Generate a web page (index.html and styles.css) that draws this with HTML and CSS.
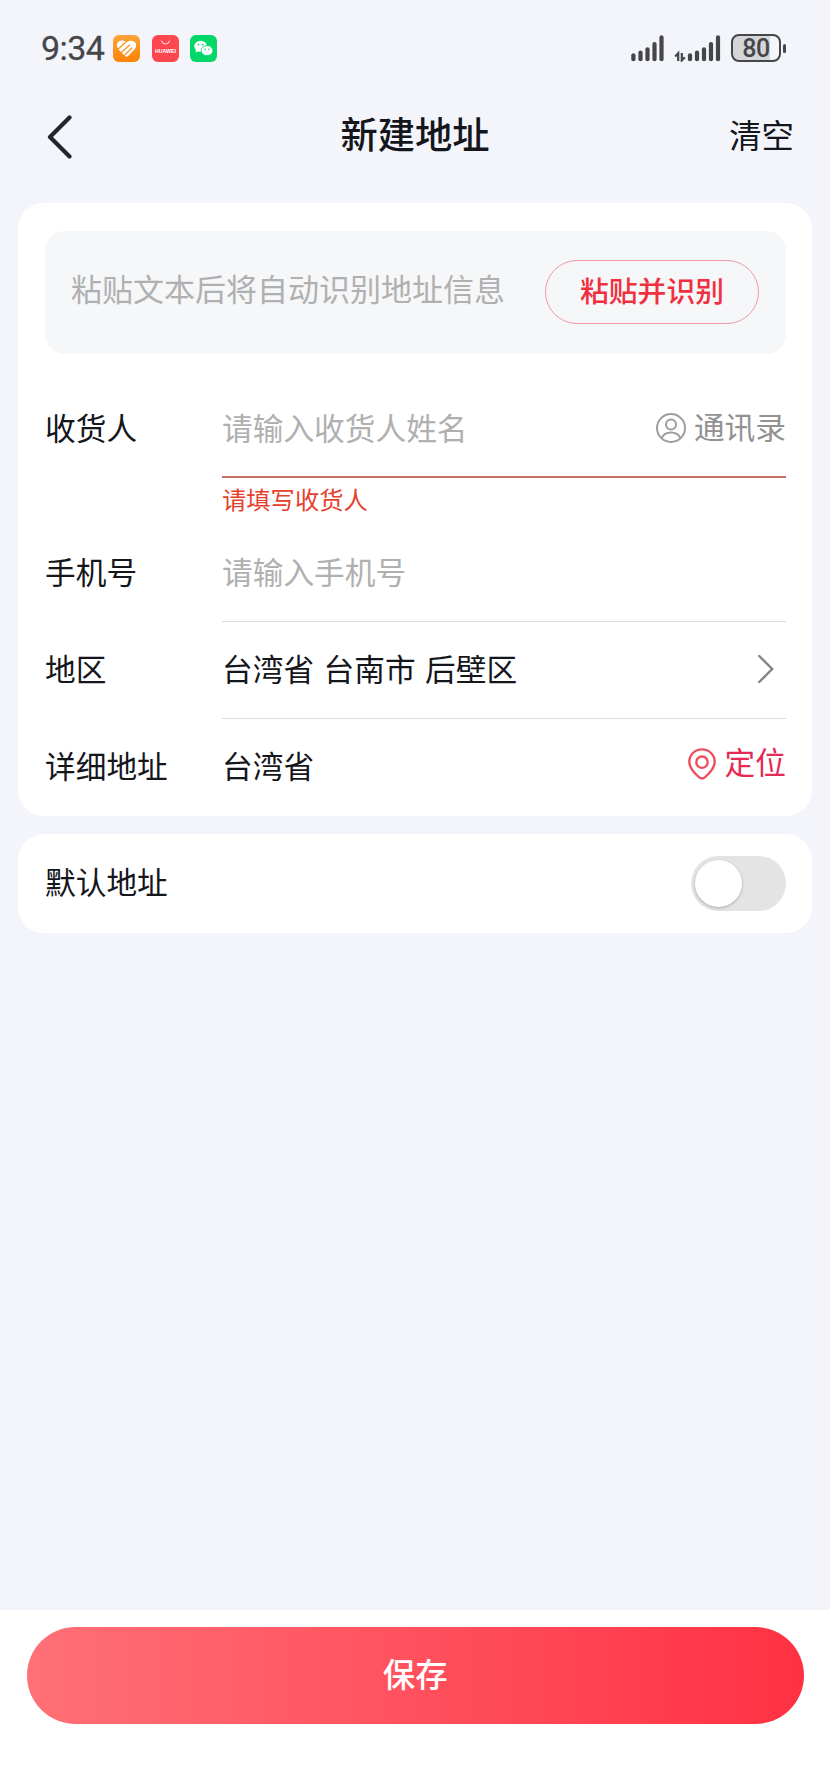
FILE: index.html
```html
<!DOCTYPE html>
<html lang="zh-CN">
<head>
    <meta charset="UTF-8">
    <meta name="viewport" content="width=device-width, initial-scale=1.0">
    <title>新建地址</title>
    <link rel="stylesheet" href="styles.css">
</head>
<body>
    <div class="status-bar">
        <span class="time">9:34</span>
        <div class="app-icons">
            <svg width="27" height="27" viewBox="0 0 27 27">
                <defs>
                    <linearGradient id="orange" x1="0" y1="0" x2="0" y2="1">
                        <stop offset="0" stop-color="#fba33a"/>
                        <stop offset="1" stop-color="#fd8204"/>
                    </linearGradient>
                </defs>
                <rect width="27" height="27" rx="6" fill="url(#orange)"/>
                <path d="M13.5 7.6 C10.6 4.6 6.6 5.2 4.8 7.6 C3.2 10 3.8 12.6 5.4 14.2 L11.6 20.8 Q13.5 22.6 15.4 20.8 L21.6 14.2 C23.4 12.2 23.8 9.6 22.2 7.6 C20.2 5.2 16.4 4.8 13.5 7.6Z" fill="#fff"/>
                <g fill="none" stroke="#fd9320" stroke-width="1.3">
                    <path d="M3.4 13.6 L5.2 14 L12.6 7.2"/>
                    <path d="M8.4 17.6 L16.8 9.8"/>
                    <path d="M11.2 20.6 L19 12.8"/>
                </g>
            </svg>
            <svg width="27" height="27" viewBox="0 0 27 27">
                <rect width="27" height="27" rx="6" fill="#fc4751"/>
                <path d="M9.4 6 A4.2 3.8 0 0 0 17.6 6" fill="none" stroke="#fff" stroke-width="0.9" stroke-linecap="round"/>
                <text class="huawei" x="13.5" y="17.6" text-anchor="middle" textLength="21" lengthAdjust="spacingAndGlyphs">HUAWEI</text>
            </svg>
            <svg width="27" height="27" viewBox="0 0 27 27">
                <rect width="27" height="27" rx="6" fill="#04d76a"/>
                <path d="M6 14.5 L5.6 17.6 L8.8 15.8Z M19 18 L21.2 20.6 L21 17Z" fill="#fff"/>
                <ellipse cx="10.6" cy="11.3" rx="6.4" ry="5.5" fill="#fff"/>
                <ellipse cx="17" cy="15.6" rx="5.9" ry="5" fill="#fff" stroke="#04d76a" stroke-width="0.8"/>
                <g fill="#04d76a">
                    <circle cx="8.5" cy="9.6" r="0.9"/>
                    <circle cx="12.8" cy="9.6" r="0.9"/>
                    <circle cx="15.2" cy="14.2" r="0.8"/>
                    <circle cx="18.9" cy="14.2" r="0.8"/>
                </g>
            </svg>
        </div>
        <div class="indicators">
            <svg width="33" height="27" viewBox="0 0 33 27">
                <g class="bars">
                    <path d="M2.4 20.3 V24.2"/>
                    <path d="M9.5 17.5 V24.2"/>
                    <path d="M16.5 14.3 V24.2"/>
                    <path d="M23.5 9 V24.2"/>
                    <path d="M30.5 2.4 V24.2"/>
                </g>
            </svg>
            <svg width="47" height="27" viewBox="0 0 47 27">
                <g class="arrows">
                    <path d="M1.2 21.4 L4.2 18.2 V26"/>
                    <path d="M7.8 18 V25.4 L10.8 22.3"/>
                </g>
                <g class="bars">
                    <path d="M16 20.3 V24.2"/>
                    <path d="M23 17.5 V24.2"/>
                    <path d="M30 14.3 V24.2"/>
                    <path d="M37 9 V24.2"/>
                    <path d="M44 2.4 V24.2"/>
                </g>
            </svg>
            <div class="battery"><span>80</span></div>
            <i class="battery-tip"></i>
        </div>
    </div>

    <header class="header">
        <svg class="back" width="26" height="44" viewBox="0 0 26 44">
            <path d="M22.5 2.5 L3 22 L22.5 41.5"/>
        </svg>
        <h1>新建地址</h1>
        <a class="clear">清空</a>
    </header>

    <main>
        <section class="card form">
            <div class="paste-box">
                <span class="placeholder">粘贴文本后将自动识别地址信息</span>
                <button class="paste-btn">粘贴并识别</button>
            </div>

            <div class="row">
                <label>收货人</label>
                <div class="field error">
                    <span class="placeholder">请输入收货人姓名</span>
                    <a class="contacts">
                        <svg width="30" height="30" viewBox="0 0 30 30">
                            <circle cx="15" cy="15" r="14"/>
                            <circle cx="15" cy="11.4" r="5"/>
                            <path d="M5.6 25.2 C9 17.6 21 17.6 24.4 25.2"/>
                        </svg>
                        <span>通讯录</span>
                    </a>
                </div>
            </div>
            <p class="error-text">请填写收货人</p>

            <div class="row">
                <label>手机号</label>
                <div class="field"><span class="placeholder">请输入手机号</span></div>
            </div>

            <div class="row">
                <label>地区</label>
                <div class="field">
                    <span class="region">台湾省 台南市 后壁区</span>
                    <svg class="arrow" width="18" height="30" viewBox="0 0 18 30">
                        <path d="M2.2 2 L15.2 15 L2.2 28"/>
                    </svg>
                </div>
            </div>

            <div class="row last">
                <label>详细地址</label>
                <div class="field">
                    <span>台湾省</span>
                    <a class="locate">
                        <svg width="28" height="32" viewBox="0 0 28 32">
                            <path d="M14 1.4 C6.8 1.4 1.3 6.9 1.3 13.8 C1.3 20.2 6 24.9 11.2 29.4 Q14 31.6 16.8 29.4 C22 24.9 26.7 20.2 26.7 13.8 C26.7 6.9 21.2 1.4 14 1.4Z"/>
                            <circle cx="14" cy="14.2" r="5.7"/>
                        </svg>
                        <span>定位</span>
                    </a>
                </div>
            </div>
        </section>

        <section class="card default">
            <label>默认地址</label>
            <div class="switch"><i></i></div>
        </section>
    </main>

    <footer class="footer">
        <button class="save">保存</button>
    </footer>
</body>
</html>
```

FILE: styles.css
```css
* {
    box-sizing: border-box;
}
body {
    margin: 0;
    height: 1792px;
    display: flex;
    flex-direction: column;
    background: #f4f5fa;
    color: #15161c;
    font-family: "Noto Sans CJK SC", sans-serif;
    font-size: 30.7px;
    line-height: 44px;
}
svg {
    display: block;
    flex: none;
}
button {
    font-family: inherit;
    padding: 0;
}

/* status bar */
.status-bar {
    height: 96px;
    padding: 0 44px 0 41px;
    display: flex;
    align-items: center;
    color: #45464a;
}
.time {
    width: 72px;
    font-family: Roboto, sans-serif;
    font-size: 34px;
    letter-spacing: -0.6px;
    -webkit-text-stroke: 0.3px #45464a;
}
.app-icons {
    display: flex;
    gap: 11.5px;
}
.huawei {
    fill: #fff;
    font: bold 5.2px "Liberation Sans", sans-serif;
}
.indicators {
    margin-left: auto;
    display: flex;
    align-items: center;
}
.bars {
    stroke: #45464a;
    stroke-width: 4.2;
    stroke-linecap: round;
}
.arrows {
    fill: none;
    stroke: #45464a;
    stroke-width: 2.2;
}
.indicators svg + svg {
    margin-left: 10px;
}
.battery {
    width: 50px;
    height: 28px;
    margin-left: 10px;
    border: 2px solid #45464a;
    border-radius: 8px;
    background: linear-gradient(to right, #d4d5d8 80%, #f4f5fa 80%);
    font: 500 25px/25px Roboto, sans-serif;
    letter-spacing: -0.5px;
    text-align: center;
}
.battery-tip {
    width: 3px;
    height: 9px;
    margin-left: 2px;
    border-radius: 2px;
    background: #45464a;
}

/* title bar */
.header {
    height: 107px;
    padding: 0 36px 25px 47px;
    display: grid;
    grid-template-columns: 1fr auto 1fr;
    align-items: center;
}
.back {
    fill: none;
    stroke: #24262b;
    stroke-width: 4.2;
    stroke-linecap: round;
    stroke-linejoin: round;
}
.header h1 {
    margin: 0 0 8px;
    padding-right: 11px;
    font-size: 37.3px;
    font-weight: 500;
}
.clear {
    justify-self: end;
    margin-bottom: 6px;
    font-size: 32.4px;
}

/* cards */
.card {
    margin: 0 18px 18px;
    padding: 0 26px 0 27px;
    border-radius: 26px;
    background: #fff;
}
.form {
    height: 612.5px;
    padding-top: 27.5px;
}
.paste-box {
    height: 123.5px;
    margin-bottom: 26.5px;
    padding: 0 27px 0 26px;
    display: flex;
    align-items: center;
    justify-content: space-between;
    border-radius: 20px;
    background: #f6f7f8;
}
.placeholder {
    color: #b0b0b1;
}
.paste-box .placeholder {
    margin-bottom: 8px;
    font-size: 31px;
}
.paste-btn {
    width: 214px;
    height: 64px;
    padding-bottom: 5px;
    border: 1.5px solid #ee9aa8;
    border-radius: 32px;
    background: transparent;
    color: #f0303f;
    font-size: 28.8px;
    font-weight: 500;
}
.row {
    height: 97px;
    display: flex;
}
.row label {
    width: 177px;
    padding-top: 24px;
}
.field {
    flex: 1;
    display: flex;
    justify-content: space-between;
    padding-top: 24px;
    border-bottom: 1px solid #dcdcdd;
}
.field.error {
    border-bottom: 2px solid #c76f65;
}
.row.last .field {
    border-bottom: none;
}
.contacts {
    display: flex;
    gap: 8px;
    color: #929292;
}
.contacts svg {
    margin-top: 8px;
    fill: none;
    stroke: #9d9d9d;
    stroke-width: 2;
}
.contacts span {
    margin-top: -1px;
}
.error-text {
    height: 47px;
    margin: 0;
    padding: 0 0 0 177px;
    color: #e5402c;
    font-size: 24.3px;
    line-height: 42px;
}
.region {
    word-spacing: 2.6px;
}
.arrow {
    margin: 8px 11px 0 0;
    fill: none;
    stroke: #858585;
    stroke-width: 2.4;
    stroke-linecap: round;
}
.locate {
    display: flex;
    gap: 9px;
    color: #e42a55;
}
.locate svg {
    margin-top: 5px;
    fill: none;
    stroke: #ee4f5c;
    stroke-width: 2.4;
}
.locate span {
    margin-top: -4px;
}
.default {
    height: 99.5px;
    display: flex;
    align-items: center;
    justify-content: space-between;
}
.default label {
    margin-bottom: 4px;
}
.switch {
    width: 95px;
    height: 55px;
    padding: 4px;
    border-radius: 28px;
    background: #e4e4e4;
}
.switch i {
    display: block;
    width: 47px;
    height: 47px;
    border-radius: 50%;
    background: #fff;
    box-shadow: 0 1px 3px rgba(0, 0, 0, 0.25);
}

/* bottom bar */
.footer {
    height: 182.5px;
    margin-top: auto;
    padding: 17.5px 26px 0 26.5px;
    background: #fff;
}
.save {
    display: block;
    width: 100%;
    height: 97px;
    padding-bottom: 6px;
    border: none;
    border-radius: 49px;
    background: linear-gradient(to right, #ff7077, #ff3143);
    color: #fff;
    font-size: 32.4px;
    font-weight: 500;
}
```
